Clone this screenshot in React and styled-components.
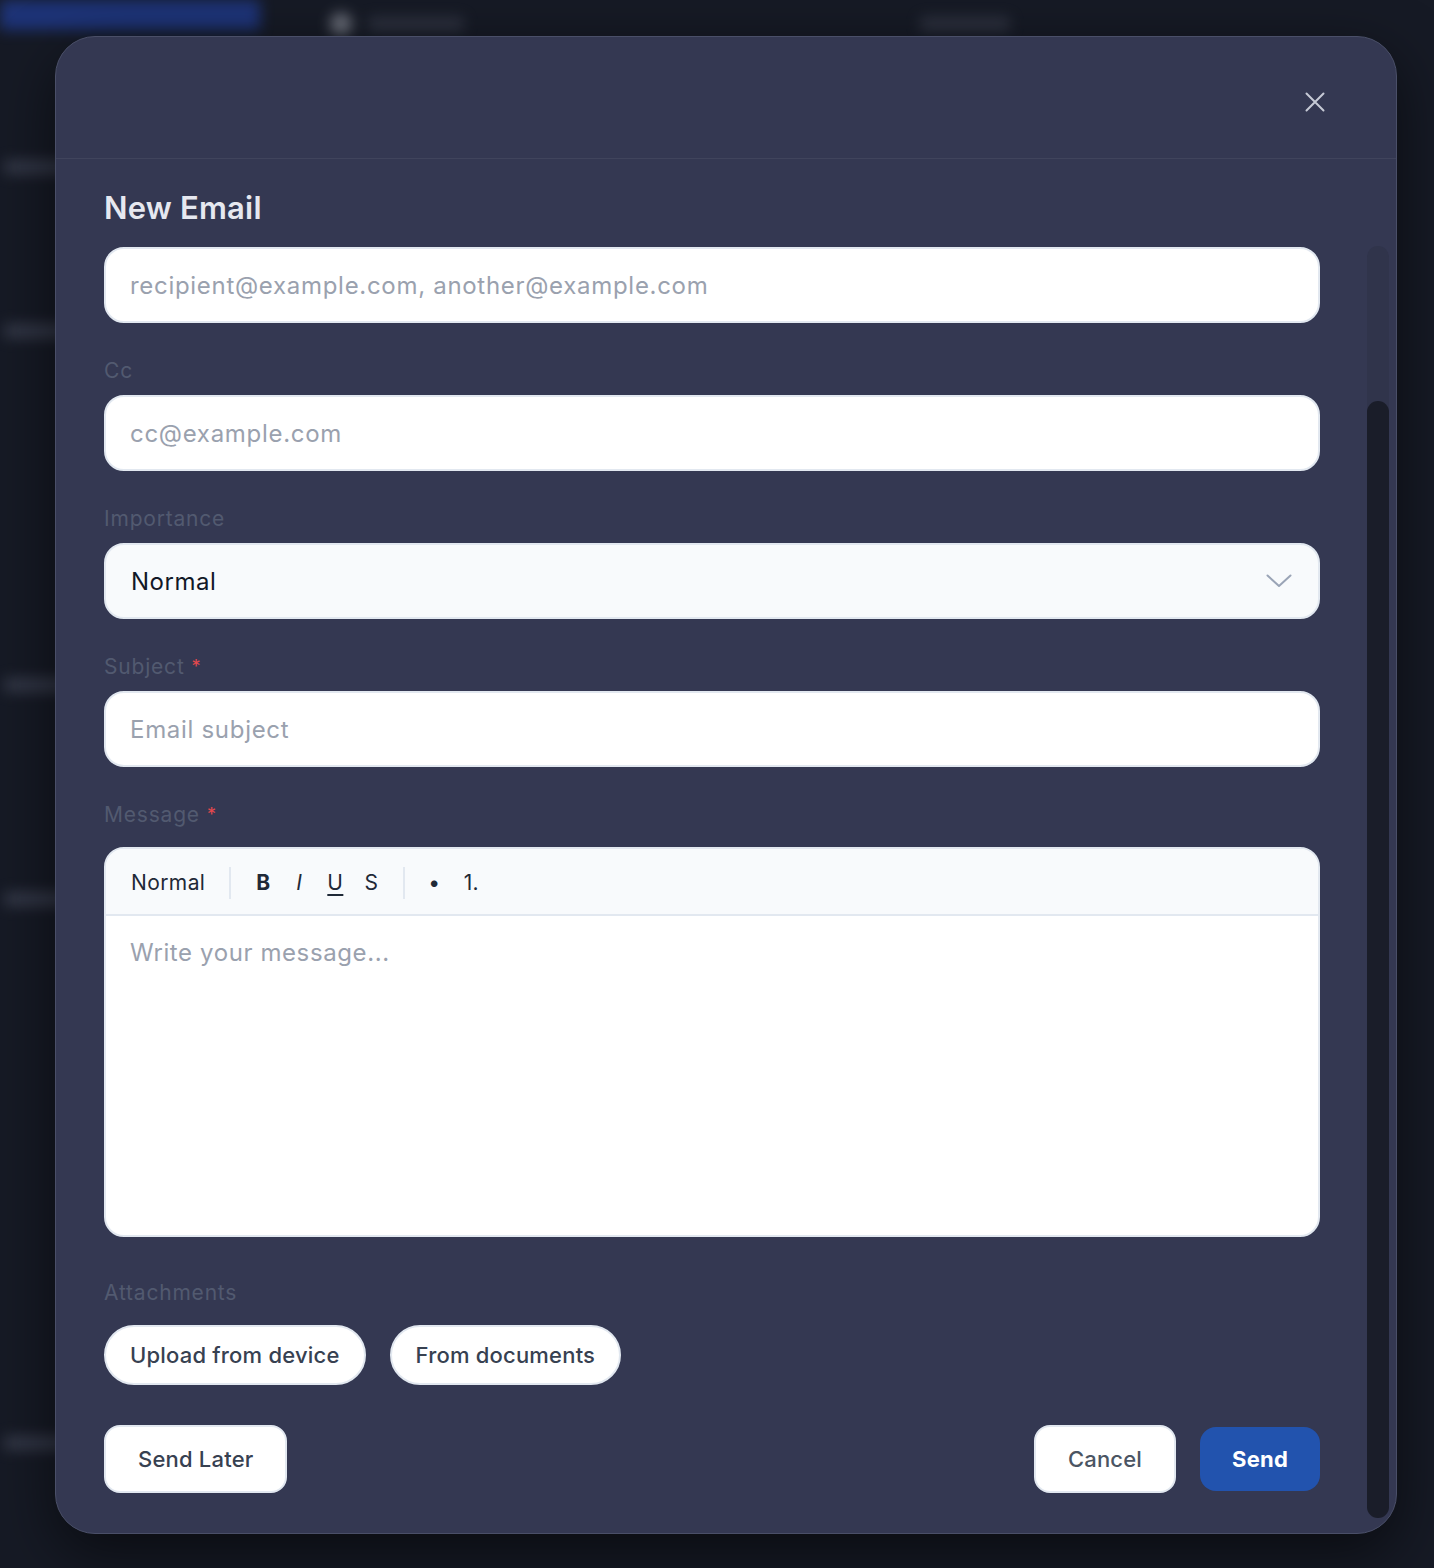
import React from 'react'
import styled, { createGlobalStyle } from 'styled-components'

const GlobalStyle = createGlobalStyle`
  html, body {
    margin: 0;
    padding: 0;
    background: #161a25;
    font-family: Inter, "Noto Sans", "Liberation Sans", sans-serif;
    overflow: hidden;
  }
  * { box-sizing: border-box; }
`

const Page = styled.div`
  position: relative;
  width: 1434px;
  height: 1568px;
  overflow: hidden;
  background: #161a25;
`

// blurred app behind the dialog
const Backdrop = styled.div`
  position: absolute;
  inset: 0;
  display: flex;
  filter: blur(7px);
  opacity: 0.85;
`

const Sidebar = styled.div`
  width: 270px;
  display: flex;
  flex-direction: column;
`

const SideLogo = styled.div`
  height: 30px;
  width: 260px;
  background: #1f3886;
`

const SideItem = styled.div`
  margin-top: ${p => p.$top}px;
  margin-left: 4px;
  width: 70px;
  height: 14px;
  border-radius: 4px;
  background: #3a3f4f;
`

const TopBar = styled.div`
  flex: 1;
  height: 48px;
  display: flex;
  align-items: center;
  gap: 16px;
  padding-left: 60px;
`

const TopDot = styled.div`
  width: 22px;
  height: 22px;
  border-radius: 50%;
  background: #7b7f8a;
`

const TopText = styled.div`
  width: ${p => p.$w}px;
  height: 14px;
  border-radius: 4px;
  background: #323644;
  margin-left: ${p => p.$ml || 0}px;
`

const Modal = styled.div`
  position: absolute;
  left: 55px;
  top: 36px;
  width: 1342px;
  height: 1498px;
  background: #343852;
  border: 1px solid #4a4f68;
  border-radius: 40px;
  box-shadow: 0 20px 60px rgba(0, 0, 0, 0.55);
  display: flex;
  flex-direction: column;
  overflow: hidden;
`

const Header = styled.div`
  height: 122px;
  flex-shrink: 0;
  border-bottom: 1px solid #40445c;
  display: flex;
  align-items: center;
  justify-content: flex-end;
  padding: 8px 70px 0 0;
`

const CloseButton = styled.button`
  background: none;
  border: none;
  padding: 0;
  width: 22px;
  height: 22px;
  display: flex;
  align-items: center;
  justify-content: center;
  cursor: pointer;
`

const Body = styled.div`
  flex: 1;
  display: flex;
  min-height: 0;
`

const Content = styled.div`
  flex: 1;
  padding: 31px 47px 0 48px;
  display: flex;
  flex-direction: column;
`

const Scrollbar = styled.div`
  width: 22px;
  margin: 87px 7px 15px 0;
  border-radius: 11px;
  background: #30344b;
  display: flex;
  flex-direction: column;
  justify-content: flex-end;
`

const Thumb = styled.div`
  height: 1117px;
  border-radius: 11px;
  background: #1a1d29;
`

const Title = styled.h2`
  margin: 0 0 21px;
  font-size: 31px;
  line-height: 36px;
  font-weight: 600;
  color: #e6e8f0;
  letter-spacing: 0.2px;
`

const Field = styled.div`
  display: flex;
  flex-direction: column;
  margin-top: ${p => p.$top ?? 36}px;
`

const Label = styled.label`
  font-size: 21px;
  line-height: 24px;
  letter-spacing: 0.8px;
  color: #525a70;
  margin-bottom: ${p => p.$gap ?? 12}px;
`

const Required = styled.span`
  color: #e5484d;
  margin-left: 7px;
  font-size: 18px;
  vertical-align: top;
`

const Input = styled.input`
  height: 76px;
  width: 100%;
  border: 2px solid #e2e8f0;
  border-radius: 20px;
  background: #ffffff;
  padding: 0 24px;
  font-family: inherit;
  font-size: 24px;
  letter-spacing: 0.7px;
  color: #111827;
  outline: none;
  &::placeholder {
    color: #9aa1ae;
  }
`

const Select = styled.div`
  height: 76px;
  border: 2px solid #e2e8f0;
  border-radius: 20px;
  background: #f8fafc;
  padding: 0 26px 0 25px;
  display: flex;
  align-items: center;
  justify-content: space-between;
  font-size: 24px;
  letter-spacing: 0.5px;
  color: #111827;
`

const Editor = styled.div`
  height: 390px;
  border: 2px solid #e2e8f0;
  border-radius: 20px;
  background: #ffffff;
  overflow: hidden;
  display: flex;
  flex-direction: column;
`

const Toolbar = styled.div`
  height: 67px;
  flex-shrink: 0;
  background: #f8fafc;
  border-bottom: 2px solid #e2e8f0;
  display: flex;
  align-items: center;
  padding: 2px 0 0 25px;
  font-size: 21px;
  letter-spacing: 0.4px;
  color: #1f2937;
`

const ToolGroup = styled.div`
  display: flex;
  align-items: center;
  gap: ${p => p.$gap || 0}px;
`

const ToolDivider = styled.div`
  width: 2px;
  height: 32px;
  background: #e2e8f0;
  margin: 0 ${p => p.$r || 22}px 0 ${p => p.$l || 24}px;
`

const ToolButton = styled.span`
  display: inline-block;
  min-width: 18px;
  text-align: center;
  font-weight: ${p => (p.$bold ? 700 : 400)};
  font-style: ${p => (p.$italic ? 'italic' : 'normal')};
  text-decoration: ${p => (p.$underline ? 'underline' : 'none')};
  text-underline-offset: 4px;
  text-decoration-thickness: 2px;
  color: #1f2937;
`

const EditorBody = styled.div`
  flex: 1;
  padding: 20px 24px;
  font-size: 24px;
  line-height: 34px;
  letter-spacing: 0.6px;
  color: #9aa1ae;
`

const Row = styled.div`
  display: flex;
  align-items: center;
  gap: ${p => p.$gap || 0}px;
  justify-content: ${p => p.$justify || 'flex-start'};
  margin-top: ${p => p.$top || 0}px;
`

const PillButton = styled.button`
  height: 60px;
  padding: 0 24px;
  border: 2px solid #e2e8f0;
  border-radius: 30px;
  background: #ffffff;
  font-family: inherit;
  font-size: 22px;
  font-weight: 500;
  letter-spacing: 0.2px;
  color: #374151;
  cursor: pointer;
`

const Button = styled.button`
  height: ${p => (p.$primary ? 64 : 68)}px;
  padding: 0 ${p => (p.$primary ? 32 : 32)}px;
  border: ${p => (p.$primary ? 'none' : '2px solid #e2e8f0')};
  border-radius: 16px;
  background: ${p => (p.$primary ? '#2253ae' : '#ffffff')};
  font-family: inherit;
  font-size: 22px;
  font-weight: ${p => (p.$primary ? 700 : 500)};
  letter-spacing: 0.2px;
  color: ${p => (p.$primary ? '#ffffff' : p.$muted ? '#4b5563' : '#374151')};
  cursor: pointer;
`

const FooterRight = styled.div`
  display: flex;
  align-items: center;
  gap: 24px;
`

const CloseIcon = () => (
  <svg width="20" height="20" viewBox="0 0 20 20" fill="none">
    <path d="M1.5 1.5L18.5 18.5M18.5 1.5L1.5 18.5" stroke="#c6cad6" strokeWidth="2" strokeLinecap="round" />
  </svg>
)

const Chevron = () => (
  <svg width="26" height="14" viewBox="0 0 26 14" fill="none">
    <path d="M1.5 1.5L13 12L24.5 1.5" stroke="#9aa4b6" strokeWidth="2" strokeLinecap="round" strokeLinejoin="round" />
  </svg>
)

export default function App() {
  return (
    <Page>
      <GlobalStyle />
      <Backdrop>
        <Sidebar>
          <SideLogo />
          <SideItem $top={130} />
          <SideItem $top={150} />
          <SideItem $top={340} />
          <SideItem $top={200} />
          <SideItem $top={530} />
        </Sidebar>
        <TopBar>
          <TopDot />
          <TopText $w={96} />
          <TopText $w={90} $ml={440} />
        </TopBar>
      </Backdrop>

      <Modal>
        <Header>
          <CloseButton aria-label="Close">
            <CloseIcon />
          </CloseButton>
        </Header>
        <Body>
          <Content>
            <Title>New Email</Title>
            <Field $top={0}>
              <Input placeholder="recipient@example.com, another@example.com" />
            </Field>

            <Field>
              <Label>Cc</Label>
              <Input placeholder="cc@example.com" />
            </Field>

            <Field>
              <Label>Importance</Label>
              <Select>
                <span>Normal</span>
                <Chevron />
              </Select>
            </Field>

            <Field>
              <Label>
                Subject<Required>*</Required>
              </Label>
              <Input placeholder="Email subject" />
            </Field>

            <Field>
              <Label $gap={20}>
                Message<Required>*</Required>
              </Label>
              <Editor>
                <Toolbar>
                  <span>Normal</span>
                  <ToolDivider $l={24} $r={23} />
                  <ToolGroup $gap={18}>
                    <ToolButton $bold>B</ToolButton>
                    <ToolButton $italic>I</ToolButton>
                    <ToolButton $underline>U</ToolButton>
                    <ToolButton>S</ToolButton>
                  </ToolGroup>
                  <ToolDivider $l={23} $r={20} />
                  <ToolGroup $gap={19}>
                    <ToolButton>•</ToolButton>
                    <ToolButton>1.</ToolButton>
                  </ToolGroup>
                </Toolbar>
                <EditorBody>Write your message...</EditorBody>
              </Editor>
            </Field>

            <Field $top={44}>
              <Label $gap={20}>Attachments</Label>
              <Row $gap={24}>
                <PillButton>Upload from device</PillButton>
                <PillButton>From documents</PillButton>
              </Row>
            </Field>

            <Row $justify="space-between" $top={40}>
              <Button>Send Later</Button>
              <FooterRight>
                <Button $muted>Cancel</Button>
                <Button $primary>Send</Button>
              </FooterRight>
            </Row>
          </Content>
          <Scrollbar>
            <Thumb />
          </Scrollbar>
        </Body>
      </Modal>
    </Page>
  )
}
